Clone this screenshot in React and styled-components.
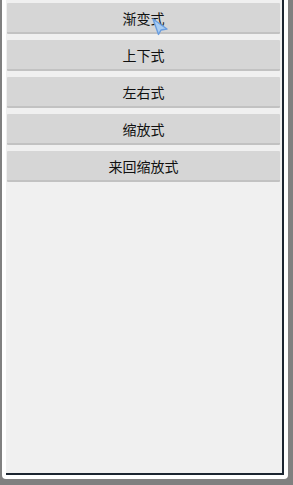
import React from 'react';
import styled, { createGlobalStyle } from 'styled-components';

const GlobalStyle = createGlobalStyle`
  html, body {
    margin: 0;
    padding: 0;
    background: #808080;
  }
  body {
    font-family: "Noto Sans CJK SC", "Noto Sans", sans-serif;
  }
`;

const Page = styled.div`
  width: 293px;
  height: 485px;
  padding-left: 2px;
  box-sizing: border-box;
  overflow: hidden;
`;

const Frame = styled.div`
  width: 286px;
  height: 479px;
  background: #ffffff;
  border-radius: 0 0 4px 4px;
  padding: 0 4px 4px 4px;
  box-sizing: border-box;
  display: flex;
`;

const Screen = styled.div`
  position: relative;
  flex: 1;
  background: #f0f0f0;
  border-right: 2px solid #1b2530;
  border-bottom: 2px solid #1b2530;
  padding: 3px 2px 0 1px;
  display: flex;
  flex-direction: column;
  gap: 6px;
`;

const Button = styled.button`
  height: 31px;
  width: 100%;
  margin: 0;
  border: none;
  border-bottom: 2px solid #c2c2c2;
  border-radius: 1px;
  background: #d6d6d6;
  color: #111111;
  font-family: "Noto Sans CJK SC", "Noto Sans", sans-serif;
  font-size: 14px;
  font-weight: 400;
  display: flex;
  align-items: center;
  justify-content: center;
  padding: 0;
`;

const Cursor = styled.svg`
  position: absolute;
  left: 145px;
  top: 17px;
  width: 18px;
  height: 19px;
`;

const items = ['渐变式', '上下式', '左右式', '缩放式', '来回缩放式'];

export default function App() {
  return (
    <>
      <GlobalStyle />
      <Page>
        <Frame>
          <Screen>
            {items.map((label) => (
              <Button key={label}>{label}</Button>
            ))}
            <Cursor viewBox="0 0 18 19">
              <path
                d="M2 2 L16 12 L10 13 L7.5 17.5 Z"
                fill="#a9cdf2"
                stroke="#6a9ee0"
                strokeWidth="1.4"
                strokeLinejoin="round"
              />
            </Cursor>
          </Screen>
        </Frame>
      </Page>
    </>
  );
}
